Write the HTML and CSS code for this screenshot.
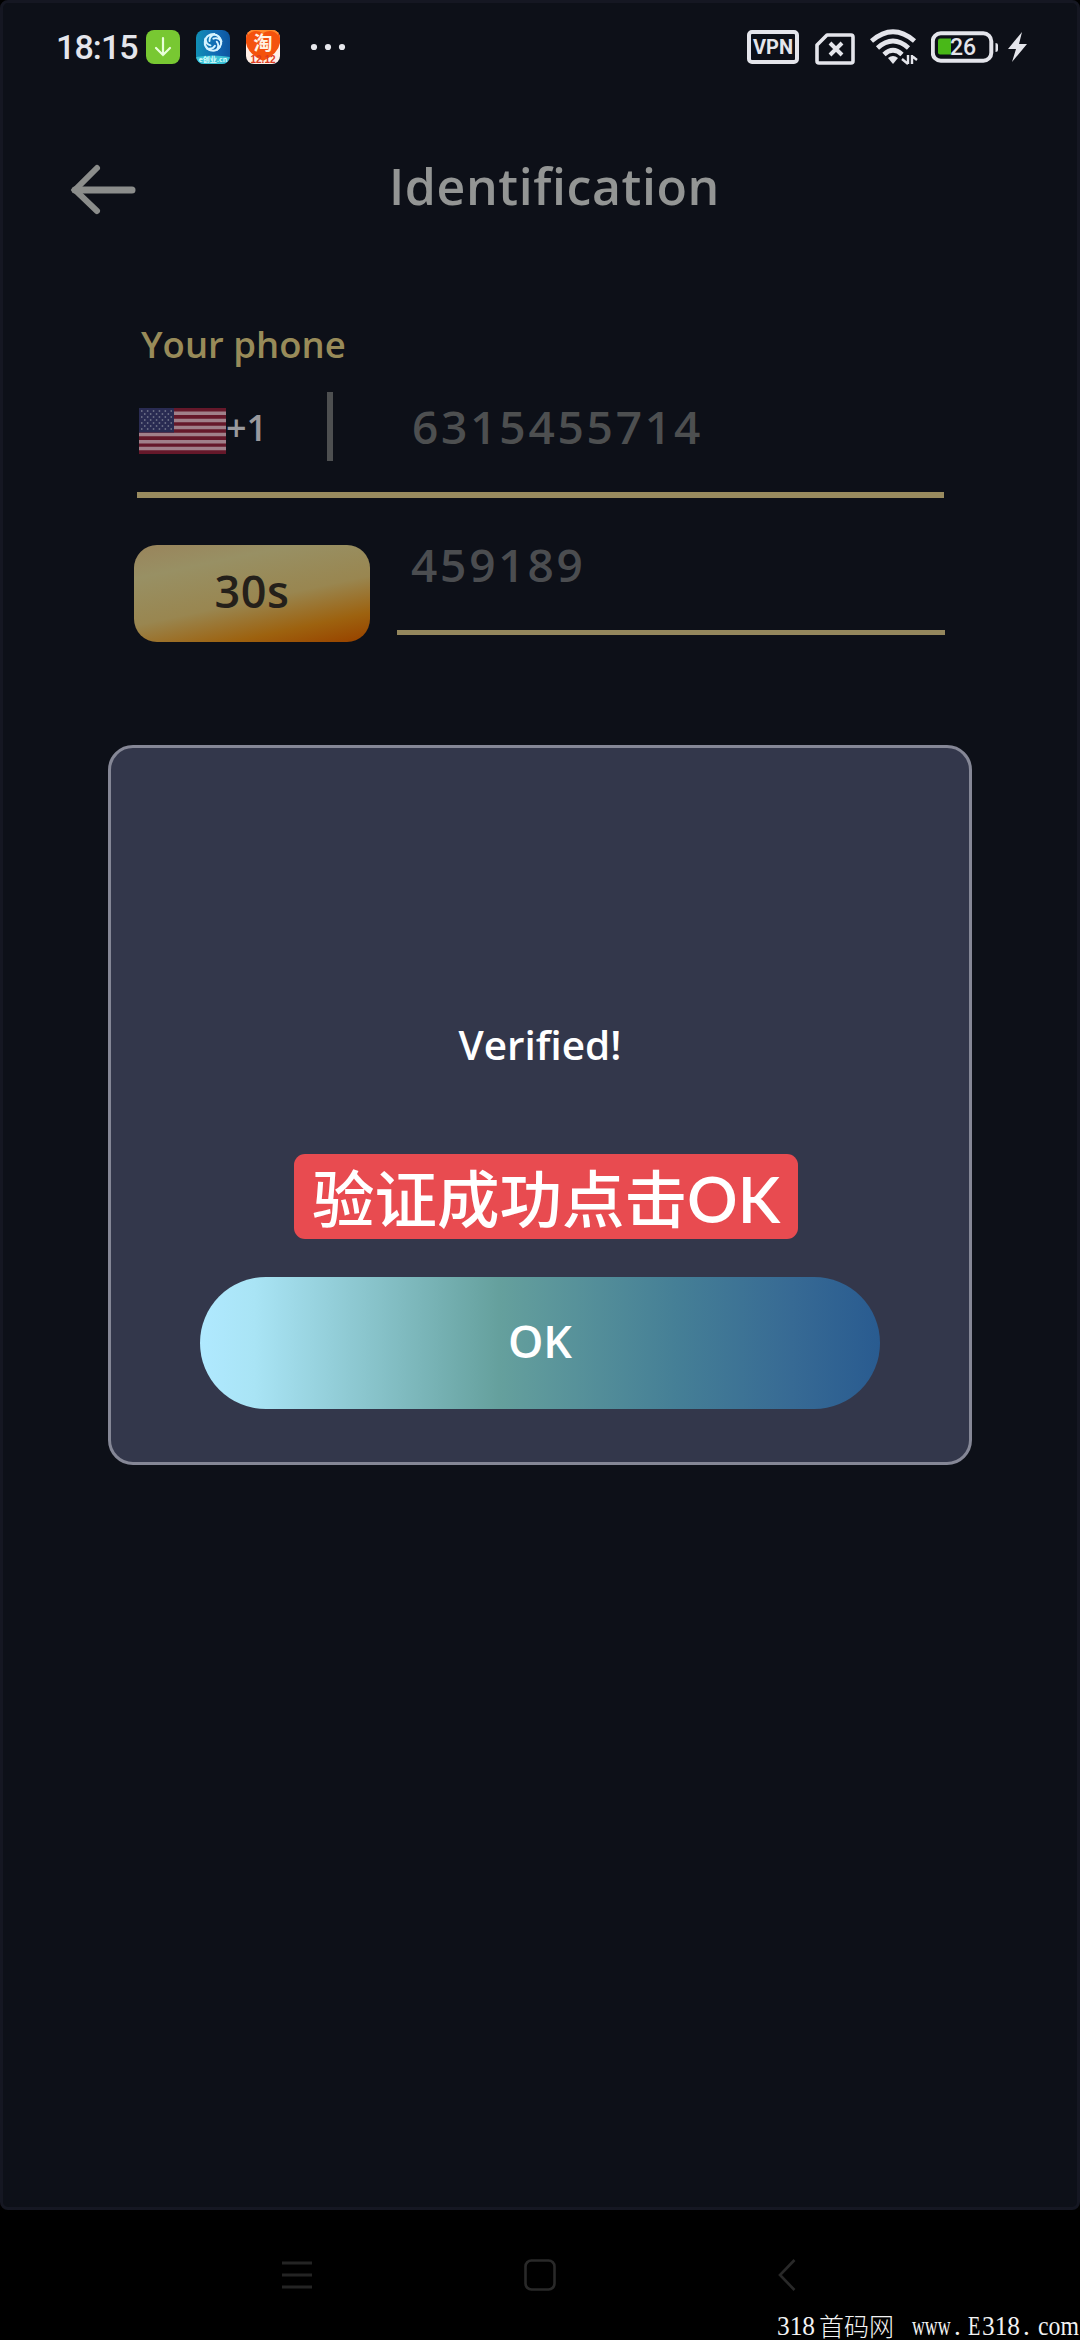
FILE: index.html
```html
<!DOCTYPE html>
<html lang="en">
<head>
<meta charset="utf-8">
<title>Identification</title>
<link rel="stylesheet" href="styles.css">
</head>
<body>
<div class="phone">
  <main class="screen">
    <div class="status">
      <span class="time">18:15</span>
      <svg class="app" width="34" height="34" viewBox="0 0 34 34"><rect width="34" height="34" rx="8" fill="#78c832"/><path d="M17 8v17M10 18l7 7 7-7" fill="none" stroke="#e8ffd8" stroke-width="2.2" stroke-linecap="round"/></svg>
      <svg class="app" width="34" height="34" viewBox="0 0 34 34"><defs><linearGradient id="blue" x1="0" x2="1"><stop stop-color="#118fb5"/><stop offset=".6" stop-color="#1269b4"/><stop offset="1" stop-color="#0c559f"/></linearGradient><clipPath id="tile"><rect width="34" height="34" rx="8"/></clipPath></defs><g clip-path="url(#tile)"><rect width="34" height="34" fill="url(#blue)"/><path d="M0 27q17-3 34 0v7H0z" fill="#3cc3d6"/><g fill="none" stroke="#d5f3ff" stroke-width="1.900" stroke-linecap="round"><path id="petal" d="M9 13Q9 4 19 4Q13 6 13.500 11"/><use href="#petal" transform="rotate(72 17 12.500)"/><use href="#petal" transform="rotate(144 17 12.500)"/><use href="#petal" transform="rotate(216 17 12.500)"/><use href="#petal" transform="rotate(288 17 12.500)"/></g><text x="17" y="32" text-anchor="middle" class="tile-caption">e创业.cn</text></g></svg>
      <svg class="app" width="34" height="34" viewBox="0 0 34 34"><g clip-path="url(#tile)"><rect width="34" height="34" fill="#fff0e8"/><path d="M0 0H34V13Q32 24 17 31 2 24 0 13z" fill="#f4520c"/><path d="M2 5q6-7 15-2 9-5 15 2V0H2z" fill="#ff8a2c"/><text x="17" y="20" text-anchor="middle" class="tile-main">淘</text><text x="17" y="33" text-anchor="middle" class="tile-date">12.12</text></g></svg>
      <svg class="dots" width="36" height="8" viewBox="0 0 36 8" fill="#e6e7ec"><circle cx="4" cy="4" r="3.1"/><circle cx="18" cy="4" r="3.1"/><circle cx="32" cy="4" r="3.1"/></svg>
      <span class="vpn">VPN</span>
      <svg class="sim" width="40" height="32" viewBox="0 0 40 32" fill="none" stroke="#e4e5eb"><path d="M12 2H36q2 0 2 2V28q0 2-2 2H4q-2 0-2-2V12z" stroke-width="3.6" stroke-linejoin="round"/><path d="M15 10l12 12M27 10l-12 12" stroke-width="4"/></svg>
      <svg class="wifi" width="48" height="36" viewBox="0 0 48 36"><g fill="none" stroke="#e4e5eb" stroke-width="4.700"><path d="M1.500 12Q23 -6.500 44.500 12"/><path d="M7.500 19Q23 5 38.500 19"/><path d="M14 25.500Q23 17 32 25.500"/></g><path d="M18 29q5-4 10 0l-5 6z" fill="#e4e5eb"/><path d="M38 26v9M32 30l6 5M42 35v-9M42 27l5 4" stroke="#e4e5eb" stroke-width="2.400" fill="none"/></svg>
      <svg class="battery" width="68" height="32" viewBox="0 0 68 32"><rect x="1.800" y="2.300" width="58.500" height="27.500" rx="8" fill="none" stroke="#e4e5eb" stroke-width="4"/><path d="M9 7.500h11v16H9q-2 0-2-2v-12q0-2 2-2z" fill="#49b818"/><path d="M64.500 12q2.500 0 2.500 2v5q0 2-2.500 2z" fill="#e4e5eb"/><text x="32" y="24" text-anchor="middle" class="charge">26</text></svg>
      <svg class="bolt" width="20" height="30" viewBox="0 0 20 30"><path d="M14 0L0 17h8L4 30 19 12h-8z" fill="#e4e5eb"/></svg>
    </div>
    <header class="bar">
      <svg width="66" height="54" viewBox="0 0 66 54" fill="none" stroke="#8b8d8b" stroke-width="6" stroke-linecap="round"><path d="M27 5L5 27l22 21"/><path d="M5 27h57" stroke-width="7"/></svg>
      <h1>Identification</h1>
    </header>
    <section class="form">
      <label>Your phone</label>
      <div class="phone-row">
        <svg class="flag" width="87" height="46" viewBox="0 0 87 46"><rect width="87" height="46" fill="#65182a"/><path d="M0 5.300h87M0 12.400h87M0 19.500h87M0 26.600h87M0 33.700h87M0 40.400h87" stroke="#a0808a" stroke-width="3.500"/><rect width="35" height="24.500" fill="#292b52"/><path d="M2 3h32M5 6h27M2 9h32M5 12h27M2 15h32M5 18h27M2 21h32" stroke="#7a7d91" stroke-width="1.300" stroke-dasharray="1.500 4.400"/></svg>
        <span class="code">+1</span>
        <i class="divider"></i>
        <span class="number">6315455714</span>
      </div>
      <div class="code-row">
        <div class="timer"><span>30s</span></div>
        <div class="sms"><span>459189</span></div>
      </div>
    </section>
    <div class="modal">
      <p class="verified">Verified!</p>
      <p class="hint">验证成功点击<span class="hint-ok">OK</span></p>
      <div class="ok"><span>OK</span></div>
    </div>
  </main>
  <footer class="nav">
    <svg width="30" height="30" viewBox="0 0 30 30" stroke="#242424" stroke-width="3"><path d="M0 3h30M0 15h30M0 27h30"/></svg>
    <svg width="32" height="32" viewBox="0 0 32 32" fill="none" stroke="#292929" stroke-width="2.600"><rect x="1.500" y="1.500" width="29" height="29" rx="6"/></svg>
    <svg width="18" height="32" viewBox="0 0 18 32" fill="none" stroke="#292929" stroke-width="2.600"><path d="M16.500 1L2 16l14.500 15"/></svg>
    <svg class="mark" width="304" height="40" viewBox="0 0 304 40"><g class="mark-text"><text transform="translate(1 35) scale(.94 1)">318</text><text x="43" y="36" class="mark-cjk">首码网</text><text transform="translate(136 35) scale(.66 1)">www</text><text x="178" y="35">.</text><text transform="translate(192 35) scale(.75 1)">E</text><text transform="translate(206 35) scale(.94 1)">318</text><text x="247" y="35">.</text><text transform="translate(262 35) scale(.88 1)">com</text></g></svg>
  </footer>
</div>
</body>
</html>
```
FILE: styles.css
```css
* { box-sizing: border-box; }
body { margin: 0; background: #000; }
h1, p { margin: 0; }
svg { display: block; flex: none; }
.phone { width: 1080px; height: 2340px; overflow: hidden; font-family: "Open Sans", "Noto Sans CJK SC", sans-serif; }
.screen { position: relative; height: 2210px; background: #0d1018; border: 3px solid #151722; border-radius: 8px; }
.status { height: 88px; padding: 0 0 0 53px; display: flex; align-items: center; color: #e4e5eb; }
.time { width: 83px; margin-right: 7px; font: 500 34px/40px Roboto, sans-serif; letter-spacing: -.9px; white-space: nowrap; }
.app { margin-right: 16px; }
.dots { margin-left: 14px; }
.vpn { width: 52px; height: 34px; margin-left: 401px; border: 4px solid #e4e5eb; border-radius: 5px; font: 700 20px/27px Roboto, sans-serif; text-align: center; }
.sim { margin-left: 16px; margin-top: 4px; }
.wifi { margin-left: 15px; }
.battery { margin-left: 13px; }
.bolt { margin-left: 9px; }
.tile-caption { font: 700 7px "Noto Sans CJK SC", sans-serif; fill: #d9ffff; }
.tile-main { font: 700 19px "Noto Sans CJK SC", sans-serif; fill: #fff3e4; }
.tile-date { font: 700 10px "Liberation Sans", sans-serif; fill: #dd3b20; }
.charge { font: 500 23px Roboto, sans-serif; fill: #e4e5eb; }
.bar { height: 194px; padding: 72px 0 0 67px; display: flex; align-items: flex-start; color: #939594; }
.bar h1 { margin: -19px 0 0 253px; font-size: 50px; line-height: 84px; font-weight: 600; letter-spacing: .6px; }
.form { padding: 29px 0 0 134px; }
.form label { display: block; height: 64px; padding: 3px 0 0 4px; font-size: 36.5px; line-height: 54px; font-weight: 600; color: #988b59; }
.phone-row { width: 807px; height: 120px; border-bottom: 6px solid #998b5f; display: flex; align-items: flex-start; padding: 11px 0 0 2px; }
.flag { margin-top: 19px; }
.code { width: 101px; margin-top: 14px; font-size: 36px; line-height: 50px; font-weight: 600; color: #99999d; }
.divider { width: 6px; height: 69px; margin-top: 3px; background: #4d4f50; }
.number { margin: 7px 0 0 79px; font-size: 46px; line-height: 60px; font-weight: 600; letter-spacing: 2.8px; color: #4d4f50; }
.code-row { width: 811px; height: 144px; padding-top: 47px; margin-left: -3px; display: flex; }
.timer { width: 236px; height: 97px; border-radius: 23px; background: linear-gradient(168deg, #99845b 0%, #989064 23%, #998650 55%, #9d620f 80%, #994700 96%); text-align: center; font-size: 45px; line-height: 91px; font-weight: 600; letter-spacing: .5px; color: #24201a; }
.sms { width: 548px; height: 90px; margin-left: 27px; padding-left: 14px; border-bottom: 5px solid #94875d; font-size: 46px; line-height: 39px; font-weight: 600; letter-spacing: 2.8px; color: #4b4d50; }
.modal { position: absolute; left: 105px; top: 742px; width: 864px; height: 720px; padding-top: 269px; border: 3px solid #858796; border-radius: 25px; background: #33374b; display: flex; flex-direction: column; align-items: center; }
.verified { height: 56px; font-size: 40.5px; line-height: 56px; font-weight: 600; color: #fff; }
.hint { width: 504px; height: 85px; margin: 81px 0 0 12px; padding-left: 18px; border-radius: 11px; background: #e84b50; color: #fff; font: 500 62.5px/84px "Noto Sans CJK SC", sans-serif; white-space: nowrap; }
.hint-ok { font: 600 63px/80px Lato, sans-serif; }
.ok { width: 680px; height: 132px; margin-top: 38px; border-radius: 66px; background: linear-gradient(90deg, #b0e9ff 0%, #a9e4f5 8%, #65a09d 44%, #457f96 70%, #376a94 87%, #295b90 100%); text-align: center; font-size: 45px; line-height: 127px; font-weight: 600; color: #fff; }
.nav { position: relative; height: 130px; display: flex; align-items: center; padding: 0 0 0 282px; background: #000; }
.nav svg:nth-child(2) { margin-left: 212px; }
.nav svg:nth-child(3) { margin-left: 222px; }
.mark { position: absolute; right: 0; bottom: 0; }
.mark-text { font: 27px "Liberation Serif", serif; fill: #f2f2f2; }
.mark-cjk { font: 300 25px "Noto Sans CJK SC", sans-serif; }
```
